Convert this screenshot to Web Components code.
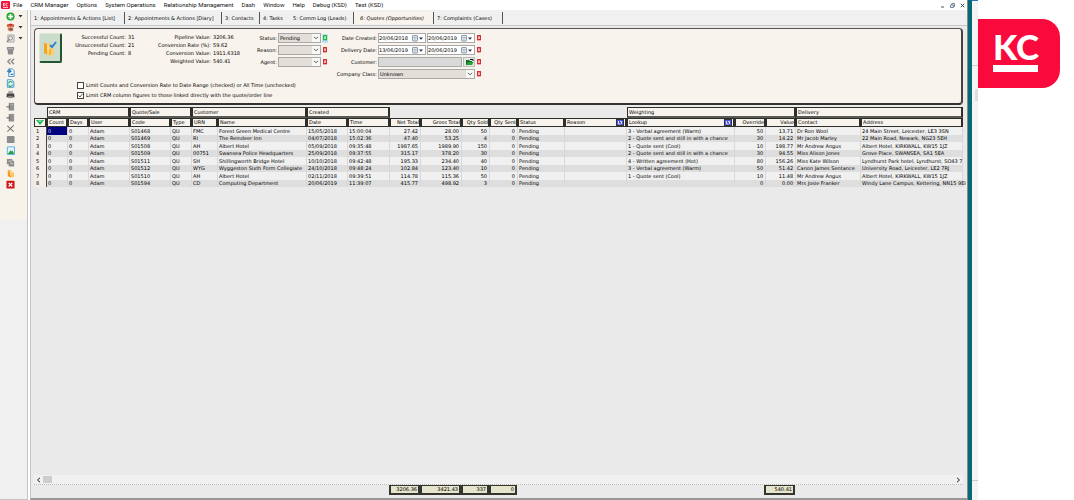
<!DOCTYPE html>
<html lang="en">
<head>
<meta charset="utf-8">
<title>CRM Manager</title>
<style>
  body {
    margin: 0;
    background: #fff;
    color: #000;
    font: 5px/8px "DejaVu Sans", Verdana, sans-serif;
  }
</style>
</head>
<body>
<crm-app></crm-app>

<script>
const controls = `
  :host, * { box-sizing: border-box; }
  button, input, select { font: inherit; color: inherit; margin: 0; padding: 0; border: 0; border-radius: 0; }
  button { background: none; display: flex; align-items: center; justify-content: center; }
  svg { display: block; }
`;

class MenuBar extends HTMLElement {
  constructor() {
    super();
    this.shadowDom = this.attachShadow({ mode: 'open' });
  }

  connectedCallback() {
    const items = ['File', 'CRM Manager', 'Options', 'System Operations', 'Relationship Management', 'Dash', 'Window', 'Help', 'Debug (KSD)', 'Test (KSD)'];
    this.shadowDom.innerHTML = `
      <style>
        ${controls}
        :host { display: flex; align-items: center; height: 10px; padding: 0 2px 0 1px; background: #fff; font: 6px/8px Roboto, sans-serif; }
        nav { display: flex; gap: 8px; flex: 1; margin-left: 3px; }
        a { color: #111; text-decoration: none; white-space: nowrap; }
        .win { display: flex; gap: 4px; }
        .win button { width: 6px; height: 8px; }
      </style>
      <svg width="9" height="9" viewBox="0 0 9 9"><rect width="9" height="8" rx="1" fill="#f5143c"/><path d="M2.5 2v3M4.2 2 2.8 3.5 4.2 5M6.6 2.3Q5 1.8 5 3.5T6.6 4.7M2 6.4h5" stroke="#fff" stroke-width=".8" fill="none"/></svg>
      <nav>${items.map((i) => `<a href="#">${i}</a>`).join('')}</nav>
      <div class="win">
        <button aria-label="Minimise"><svg width="5" height="5"><path d="M1 4h3" stroke="#456"/></svg></button>
        <button aria-label="Restore"><svg width="5" height="5"><path d="M.5 2h2.8v2.5H.5zM1.8 2V.5h2.7v2.8H3.3" stroke="#567" stroke-width=".8" fill="none"/></svg></button>
        <button aria-label="Close"><svg width="5" height="5"><path d="m.8.8 3.4 3.4m0-3.4L.8 4.2" stroke="#345"/></svg></button>
      </div>
    `;
  }
}
customElements.define('menu-bar', MenuBar);

// [label, svg body on a 10x10 grid, has a drop arrow]
const tools = [
  ['Add', '<circle cx="5" cy="5" r="4.5" fill="#1b9a2b"/><circle cx="5" cy="5" r="3.6" fill="#35b53c"/><path d="M5 2.3v5.4M2.3 5h5.4" stroke="#fff" stroke-width="1.8"/>', true],
  ['Edit', '<path d="m1 2 4-1.5L9 2v2L5 5 1 4z" fill="#c63425"/><path d="m2 3 3 1 3-1" stroke="#f3a46c" fill="none"/><path d="M2 5h6v3.5L5 9.5 2 8z" fill="#e0793c"/><path d="M4 6h3v2H4z" fill="#3a5da8"/>', true],
  ['Find', '<path d="M2 1h7v8H2z" fill="#ddd" stroke="#aaa"/><circle cx="5" cy="4.5" r="2.2" fill="#eee" stroke="#888"/><path d="M3.5 6 1 9" stroke="#888" stroke-width="1.4"/>', true],
  ['Filter', '<path d="M1 1h8v3L8 5v3.5L7 9.5H3L2 8.5V5L1 4z" fill="#8b8b8b"/><path d="M2 3h6" stroke="#bbb"/>'],
  ['Rewind', '<path d="M5 2 2 5l3 3M9 2 6 5l3 3" stroke="#888" stroke-width="1.4" fill="none"/>'],
  ['Import', '<path d="M3 1h4l2 2v6.5H3z" fill="#fff" stroke="#3b87c8"/><path d="M1 3.5h4M3.5 1.5l2 2-2 2M5 7h3" stroke="#2277c2" stroke-width="1.3" fill="none"/>'],
  ['Refresh', '<path d="M1.5.8h5L8.7 3v6.2H1.5z" fill="#e5f4fd" stroke="#3b94d0"/><path d="M3 5a2 2 0 0 1 4-.5M7 6a2 2 0 0 1-4 .5" stroke="#1e9e53" stroke-width="1.2" fill="none"/>'],
  ['Print', '<path d="M2.5 1h5v3h-5z" fill="#aaa"/><path d="M1 4h8l.5 4h-9z" fill="#444"/><path d="M2.5 6.5h5V9h-5z" fill="#888"/>'],
  ['Previous', '<path d="M3 1h6v8.5H3z" fill="#929292"/><path d="M.5 5.5h4M4 3v5" stroke="#777" stroke-width="1.4"/><path d="M5 3h3" stroke="#bbb"/>'],
  ['Next', '<path d="M3 1h6v8.5H3z" fill="#929292"/><path d="M.5 5.5h4M4 3v5" stroke="#777" stroke-width="1.4"/>'],
  ['Cut', '<path d="m1.5 2 7 6.5M8.5 1.5l-7 7" stroke="#777" stroke-width="1.2"/>'],
  ['Stop', '<rect x="1" y="1" width="8.500" height="8" rx="1" fill="#8c8c8c"/>'],
  ['Picture', '<path d="M1.5 1h8v8.5h-8z" fill="#e3f4ff" stroke="#4fabe0"/><path d="m2 8.8 3-4 1.4 1.4L7.4 5 9 8.8z" fill="#2f9e42"/>'],
  ['Copy', '<path d="M1 1h6v2h2v6.5H3V7H1z" fill="#8d8d8d"/><path d="M3 3.5h3M5 6h3" stroke="#ddd"/>'],
  ['Documents', '<path d="m2 1 4 1v7.5L2 8z" fill="#f09a1c"/><path d="M6 4h3v5H6z" fill="#ffc65a"/><path d="m3 2.5 2 .5v4" stroke="#ffe0a0" fill="none"/>'],
  ['Exit', '<rect x=".5" y=".8" width="9" height="8.7" rx="1" fill="#cf1717"/><path d="m3 3.2 4 4m0-4-4 4" stroke="#fff" stroke-width="1.5"/>'],
];

class ToolRail extends HTMLElement {
  constructor() {
    super();
    this.shadowDom = this.attachShadow({ mode: 'open' });
  }

  connectedCallback() {
    this.shadowDom.innerHTML = `
      <style>
        ${controls}
        :host { display: block; background: #f0f0f0; border-right: 1px solid #c6c6c6; border-bottom: 1px solid #c6c6c6; }
        .list { display: grid; grid-auto-rows: 1fr; height: 210px; padding: 1px 0 30px 6px; background: #f7f2ea; }
        button { justify-content: start; gap: 3px; }
      </style>
      <div class="list">
        ${tools.map(([name, art, drop]) => `
          <button aria-label="${name}">
            <svg width="9" height="9" viewBox="0 0 10 10">${art}</svg>
            ${drop ? '<svg width="5" height="3"><path d="M.5 0h4L2.500 2.500z" fill="#333"/></svg>' : ''}
          </button>`).join('')}
      </div>
    `;
  }
}
customElements.define('tool-rail', ToolRail);

class TabStrip extends HTMLElement {
  constructor() {
    super();
    this.shadowDom = this.attachShadow({ mode: 'open' });
  }

  connectedCallback() {
    const tabs = ['1: Appointments &amp; Actions [List]', '2: Appointments &amp; Actions [Diary]', '3: Contacts', '4: Tasks', '5: Comm Log (Leads)', '6: Quotes (Opportunities)', '7: Complaints (Cases)'];
    this.shadowDom.innerHTML = `
      <style>
        ${controls}
        :host { display: grid; grid-template-columns: 94px 97px 38px 30px 64px 80px 69px; height: 15px; padding: 2px 0 1px; background: #f0f0f0; }
        button { justify-content: start; padding-left: 3px; border-right: 1px solid #555; white-space: nowrap; }
        button:nth-child(5) { border-color: transparent; }
        button[aria-selected=true] { background: #f8f3ec; font-style: italic; padding-left: 6px; }
      </style>
      ${tabs.map((t, n) => `<button role="tab" aria-selected="${n === 5}">${t}</button>`).join('')}
    `;
  }
}
customElements.define('tab-strip', TabStrip);

// caption on the left, the control slotted in on the right
class FieldRow extends HTMLElement {
  constructor() {
    super();
    this.shadowDom = this.attachShadow({ mode: 'open' });
  }

  connectedCallback() {
    const on = this.hasAttribute('active');
    const colour = on ? '#18b834' : '#d3242e';
    this.shadowDom.innerHTML = `
      <style>
        ${controls}
        :host { display: flex; align-items: center; justify-content: end; height: 10px; gap: 1px; white-space: nowrap; }
        .clear { width: 6px; height: 9px; background: ${on ? '#bfe0f5' : 'none'}; }
      </style>
      <slot name="label"></slot>
      <slot></slot>
      <button class="clear" aria-label="Clear"><svg width="4" height="6"><rect x=".7" y=".7" width="2.600" height="4" fill="#fff" stroke="${colour}" stroke-width="1.300"/></svg></button>
    `;
  }
}
customElements.define('field-row', FieldRow);

class FilterPanel extends HTMLElement {
  constructor() {
    super();
    this.shadowDom = this.attachShadow({ mode: 'open' });
  }

  select(id, value) {
    return `<span class="drop"><select id="${id}"><option>${value}</option></select><svg width="6" height="4"><path d="m1 .8 2 2 2-2" stroke="#555" fill="none"/></svg></span>`;
  }

  date(id, value, label = '') {
    return `<span class="date"><input id="${id}" value="${value}" ${label}><button aria-label="Open calendar"><svg width="12" height="7"><rect x=".5" y=".5" width="5" height="5.500" rx=".5" fill="#dfe6ee" stroke="#7b8794" stroke-width=".8"/><path d="M1 2.500h4M3 2v3.500" stroke="#9aa8b5" stroke-width=".6"/><path d="M7 2.500h4L9 4.800z" fill="#234"/></svg></button></span>`;
  }

  connectedCallback() {
    const stats = (rows) => `<dl>${rows.map(([k, v]) => `<dt>${k}:</dt><dd>${v}</dd>`).join('')}</dl>`;
    this.shadowDom.innerHTML = `
      <style>
        ${controls}
        :host { display: block; padding: 4px 4px 0; background: #f8f3ec; height: 77px; border: 1px solid #555; border-bottom: 2px solid #333; border-right: 2px solid #444; border-radius: 4px; }
        .top { display: flex; align-items: start; height: 48px; }
        .go { flex: none; width: 23px; height: 30px; background: #cbdccb; border: 1px solid #d9e8d9; border-right: 2px solid #253; border-bottom: 2px solid #253; border-radius: 2px; }
        dl { display: grid; grid-auto-rows: 8px; column-gap: 2px; margin: 0; white-space: nowrap; text-align: right; }
        dd { margin: 0; text-align: left; }
        .counts dl { grid-template-columns: 64px 12px; }
        .values dl { grid-template-columns: 71px 26px; }
        .fields { display: grid; row-gap: 2px; }
        .left { width: 89px; }
        .right { width: 154px; }
        .drop { display: flex; align-items: center; width: 43px; height: 10px; background: #e3dfd8; border: 1px solid #a8a8a8; }
        .wide { display: contents; }
        .wide .drop { width: 97px; }
        select { flex: 1; min-width: 0; height: 8px; appearance: none; background: none; padding-left: 1px; }
        .drop svg { background: #f7f7f7; width: 8px; height: 8px; padding: 2px 1px; }
        .date { display: flex; width: 48px; height: 10px; background: #fff; border: 1px solid #a8a8a8; }
        .date input { width: 33px; min-width: 0; background: none; }
        #customer { width: 84px; height: 10px; background: #d9d9d9; border: 1px solid #aaa; }
        .pick { width: 12px; height: 10px; background: #e6e6e2; border: 1px solid #bbb; }
        .checks { display: grid; row-gap: 2px; padding-left: 38px; }
        .checks label { display: flex; align-items: center; gap: 2px; height: 8px; white-space: nowrap; }
        .checks input { appearance: none; width: 7px; height: 7px; border: 1px solid #444; background: #fff; }
        .checks input:checked { background: #fff url("data:image/svg+xml,%3Csvg xmlns='http://www.w3.org/2000/svg' viewBox='0 0 5 5'%3E%3Cpath d='M.5 2.500 2 4 4.500.8' fill='none' stroke='%23333' stroke-width='.8'/%3E%3C/svg%3E"); }
      </style>
      <div class="top">
        <button class="go" aria-label="Apply">
          <svg width="16" height="18" viewBox="0 0 16 18"><path d="m2 4 4 1v11l-4-2z" fill="#f5a623"/><path d="m5 4 4 1v4l3 1v5l-5 2-2-1z" fill="#ffcf66"/><path d="M4 6v8M8 10v6" stroke="#f29a1c"/><path d="M6 6v7" stroke="#ffe9b5"/><path d="m8 6 2 2 4-5" stroke="#2b82d4" stroke-width="2" fill="none"/></svg>
        </button>
        <div class="counts">${stats([['Successful Count', 31], ['Unsuccessful Count', 21], ['Pending Count', 8]])}</div>
        <div class="values">${stats([['Pipeline Value', '3206.36'], ['Conversion Rate (%)', '59.62'], ['Conversion Value', '1911.6318'], ['Weighted Value', '540.41']])}</div>
        <div class="fields left">
          <field-row active><label slot="label" for="status">Status:</label>${this.select('status', 'Pending')}</field-row>
          <field-row><label slot="label" for="reason">Reason:</label>${this.select('reason', '')}</field-row>
          <field-row><label slot="label" for="agent">Agent:</label>${this.select('agent', '')}</field-row>
        </div>
        <div class="fields right">
          <field-row><label slot="label" for="created">Date Created:</label>${this.date('created', '20/06/2018')}${this.date('created-to', '20/06/2019', 'aria-label="Created to"')}</field-row>
          <field-row><label slot="label" for="delivery">Delivery Date:</label>${this.date('delivery', '13/06/2019')}${this.date('delivery-to', '20/06/2019', 'aria-label="Delivery to"')}</field-row>
          <field-row><label slot="label" for="customer">Customer:</label><input id="customer"><button class="pick" aria-label="Choose customer"><svg width="9" height="8"><path d="M1 2h3l1 1h2v4H1z" fill="#146b22"/><path d="m1 7 2-3h5.500L7 7z" fill="#24a338"/><path d="M5 1.500h3v1.500" stroke="#111" fill="none"/></svg></button></field-row>
          <field-row><label slot="label" for="class">Company Class:</label><span class="wide">${this.select('class', 'Unknown')}</span></field-row>
        </div>
      </div>
      <div class="checks">
        <label><input type="checkbox">Limit Counts and Conversion Rate to Date Range (checked) or All Time (unchecked)</label>
        <label><input type="checkbox" checked>Limit CRM column figures to those linked directly with the quote/order line</label>
      </div>
    `;
  }
}
customElements.define('filter-panel', FilterPanel);

const columns = [
  ['', 13], ['Count', 21], ['Days', 21], ['User', 41], ['Code', 41], ['Type', 21], ['URN', 26], ['Name', 89],
  ['Date', 41], ['Time', 42], ['Net Total', 31, 'num'], ['Gross Total', 41, 'num'], ['Qty Sold', 28, 'num'], ['Qty Sent', 28, 'num'],
  ['Status', 47], ['Reason', 62, 'pick'], ['Lookup', 108, 'pick'], ['Override', 31, 'num'], ['Value', 30, 'num'], ['Contact', 65], ['Address', 0],
];

const groups = [['', 1], ['CRM', 3], ['Quote/Sale', 2], ['Customer', 2], ['Created', 2], ['', 6], ['Weighting', 3], ['Delivery', 2]];

const rows = [
  ['S01468', 'FMC', 'Forest Green Medical Centre', '15/05/2018', '15:00:04', '27.42', '28.00', '50', '3 - Verbal agreement (Warm)', '50', '13.71', 'Dr Ron Wool', '24 Main Street, Leicester, LE3 3SN'],
  ['S01469', 'RI', 'The Reindeer Inn', '04/07/2018', '15:02:36', '47.40', '53.25', '4', '2 - Quote sent and still in with a chance', '30', '14.22', 'Mr Jacob Marley', '22 Main Road, Newark, NG23 5EH'],
  ['S01508', 'AH', 'Albert Hotel', '05/09/2018', '09:35:48', '1987.65', '1989.90', '150', '1 - Quote sent (Cool)', '10', '198.77', 'Mr Andrew Angus', 'Albert Hotel, KIRKWALL, KW15 1JZ'],
  ['S01509', '00751', 'Swansea Police Headquarters', '25/09/2018', '09:37:55', '315.17', '378.20', '30', '2 - Quote sent and still in with a chance', '30', '94.55', 'Miss Alison Jones', 'Grove Place, SWANSEA, SA1 5EA'],
  ['S01511', 'SH', 'Shillingworth Bridge Hotel', '10/10/2018', '09:42:48', '195.33', '234.40', '40', '4 - Written agreement (Hot)', '80', '156.26', 'Miss Kate Wilson', 'Lyndhurst Park hotel, Lyndhurst, SO43 7'],
  ['S01512', 'WYG', 'Wyggeston Sixth Form Collegiate', '24/10/2018', '09:48:24', '102.84', '123.40', '10', '3 - Verbal agreement (Warm)', '50', '51.42', 'Canon James Sentance', 'University Road, Leicester, LE2 7RJ'],
  ['S01510', 'AH', 'Albert Hotel', '02/11/2018', '09:39:51', '114.78', '115.36', '50', '1 - Quote sent (Cool)', '10', '11.48', 'Mr Andrew Angus', 'Albert Hotel, KIRKWALL, KW15 1JZ'],
  ['S01594', 'CD', 'Computing Department', '20/06/2019', '11:39:07', '415.77', '498.92', '3', '', '0', '0.00', 'Mrs Josie Franker', 'Windy Lane Campus, Kettering, NN15 9EI'],
];

class QuoteTable extends HTMLElement {
  constructor() {
    super();
    this.shadowDom = this.attachShadow({ mode: 'open' });
  }

  connectedCallback() {
    const line = (r, n) => {
      const [code, urn, name, date, time, net, gross, sold, lookup, over, value, contact, address] = r;
      const cells = [n + 1, 0, 0, 'Adam', code, 'QU', urn, name, date, time, net, gross, sold, 0, 'Pending', '', lookup, over, value, contact, address];
      return `<tr>${cells.map((c, i) => `<td class="${columns[i][2] || ''}">${c}</td>`).join('')}</tr>`;
    };
    const blue = '<svg width="8" height="7"><rect width="8" height="7" fill="#333"/><rect x="1" y="1" width="6" height="5" fill="#4a55e8"/><path d="M2.500 2v3h2M4 2.500h1.500V5" stroke="#fff" stroke-width=".8" fill="none"/></svg>';
    this.shadowDom.innerHTML = `
      <style>
        ${controls}
        :host { display: block; line-height: 7px; }
        table { width: 100%; table-layout: fixed; border-spacing: 0; }
        th, td { padding: 0 1px; text-align: left; white-space: nowrap; font-weight: normal; vertical-align: middle; }
        .groups th { height: 11px; border: 1px solid #2e2e2a; border-right-width: 2px; border-bottom: 2px solid #5a5a56; background: #f8f3ec; }
        .groups th:empty { background: none; border-color: transparent; }
        .heads th { height: 9px; border: 1px solid #2e2e2a; border-right-width: 2px; background: #f8f3ec; }
        .heads div { display: flex; justify-content: space-between; align-items: center; height: 7px; }
        .heads .num div { justify-content: end; }
        tbody td { height: 8px; border-right: 1px solid #d8d8d8; background: #f0f0f0; }
        tbody tr:nth-child(even) td { height: 7px; background: #dedede; }
        tbody tr td:first-child { background: #f3efe8; border-right: 1px solid #444; padding-left: 2px; }
        tbody tr:first-child td:nth-child(2) { background: #000080; color: #dde; }
        .num { text-align: right; padding-right: 2px; }
        th.num { padding-right: 0; }
      </style>
      <table>
        <colgroup>${columns.map(([, w]) => `<col${w ? ` style="width: ${w}px"` : ''}>`).join('')}</colgroup>
        <thead>
          <tr class="groups">${groups.map(([g, span]) => `<th colspan="${span}">${g}</th>`).join('')}</tr>
          <tr class="heads">${columns.map(([c, , kind], n) => `<th class="${kind || ''}"><div>${n ? c : '<svg width="8" height="5"><path d="M0 0h8L4 5z" fill="#19b65a"/><path d="M2.500 1h3" stroke="#c9f5da"/></svg>'}${kind === 'pick' ? blue : ''}</div></th>`).join('')}</tr>
        </thead>
        <tbody>${rows.map(line).join('')}</tbody>
      </table>
    `;
  }
}
customElements.define('quote-table', QuoteTable);

class TotalsBar extends HTMLElement {
  constructor() {
    super();
    this.shadowDom = this.attachShadow({ mode: 'open' });
  }

  connectedCallback() {
    this.shadowDom.innerHTML = `
      <style>
        ${controls}
        :host { display: block; }
        .scroll { display: flex; align-items: center; height: 10px; background: #f1f1f1; border-bottom: 1px dotted #bbb; }
        .scroll button { width: 9px; height: 9px; }
        .track { flex: 1; }
        .thumb { width: 9px; height: 7px; background: #cdcdcd; }
        .totals { display: grid; grid-template-columns: 31px 41px 28px 28px 247px 31px; height: 13px; padding-left: 355px; }
        output { height: 10px; line-height: 7px; padding-right: 1px; border: 2px solid #35352e; border-width: 1px 2px 2px; background: #e5e4cc; text-align: right; }
        output:last-child { grid-column: 6; }
      </style>
      <div class="scroll">
        <button aria-label="Scroll left"><svg width="5" height="6"><path d="M4 .8 1.500 3 4 5.200" stroke="#222" fill="none"/></svg></button>
        <div class="track"><div class="thumb"></div></div>
        <button aria-label="Scroll right"><svg width="5" height="6"><path d="M1 .8 3.500 3 1 5.200" stroke="#222" fill="none"/></svg></button>
      </div>
      <div class="totals"><output>3206.36</output><output>3421.43</output><output>337</output><output>0</output><output>540.41</output></div>
    `;
  }
}
customElements.define('totals-bar', TotalsBar);

class BrandSide extends HTMLElement {
  constructor() {
    super();
    this.shadowDom = this.attachShadow({ mode: 'open' });
  }

  connectedCallback() {
    this.shadowDom.innerHTML = `
      <style>
        :host { display: grid; grid-template-columns: 5px 6px 1fr; }
        .edge { background: #056a75; border-left: 1px solid #8a8a8a; box-sizing: border-box; }
        .strip { background: linear-gradient(#2a72c4, #2a72c4) 0 0 / 6px 1px no-repeat, linear-gradient(#ccc, #ccc) 0 65px / 6px 1px no-repeat, linear-gradient(#ddd, #ddd) 3px 89px / 3px 12px no-repeat, linear-gradient(#ccc, #ccc) 0 480px / 6px 1px no-repeat, #f4f4f4; }
        .logo { width: 82px; height: 69px; margin-top: 19px; box-sizing: border-box; padding: 12px 0 0 15px; background: #fa0a3c; border-radius: 0 18px 18px 0; color: #fff; font: 900 35px/31px Lato, sans-serif; }
        .logo span { display: block; width: 45px; height: 41px; box-sizing: border-box; border-bottom: 7px solid #fff; }
      </style>
      <div class="edge"></div>
      <div class="strip"></div>
      <div class="logo"><span>KC</span></div>
    `;
  }
}
customElements.define('brand-side', BrandSide);

class CrmApp extends HTMLElement {
  constructor() {
    super();
    this.shadowDom = this.attachShadow({ mode: 'open' });
  }

  connectedCallback() {
    this.shadowDom.innerHTML = `
      <style>
        :host { display: grid; grid-template-columns: minmax(0, 1fr) 107px; min-height: 100vh; }
        .window { display: grid; grid-template-rows: auto 1fr; background: #fff; }
        .body { display: grid; grid-template-columns: 28px minmax(0, 1fr); column-gap: 2px; }
        main { display: flex; flex-direction: column; background: #f0f0f0; border-left: 1px solid #c4c4c4; border-bottom: 2px solid #999; }
        .work { flex: 1; display: flex; flex-direction: column; padding: 2px 4px 0 3px; background: #eaeaea; border-top: 1px solid #c8c8c8; }
        quote-table { flex: 1; margin-top: 2px; }
      </style>
      <div class="window">
        <menu-bar></menu-bar>
        <div class="body">
          <tool-rail></tool-rail>
          <main>
            <tab-strip></tab-strip>
            <div class="work">
              <filter-panel></filter-panel>
              <quote-table></quote-table>
              <totals-bar></totals-bar>
            </div>
          </main>
        </div>
      </div>
      <brand-side></brand-side>
    `;
  }
}
customElements.define('crm-app', CrmApp);
</script>
</body>
</html>
